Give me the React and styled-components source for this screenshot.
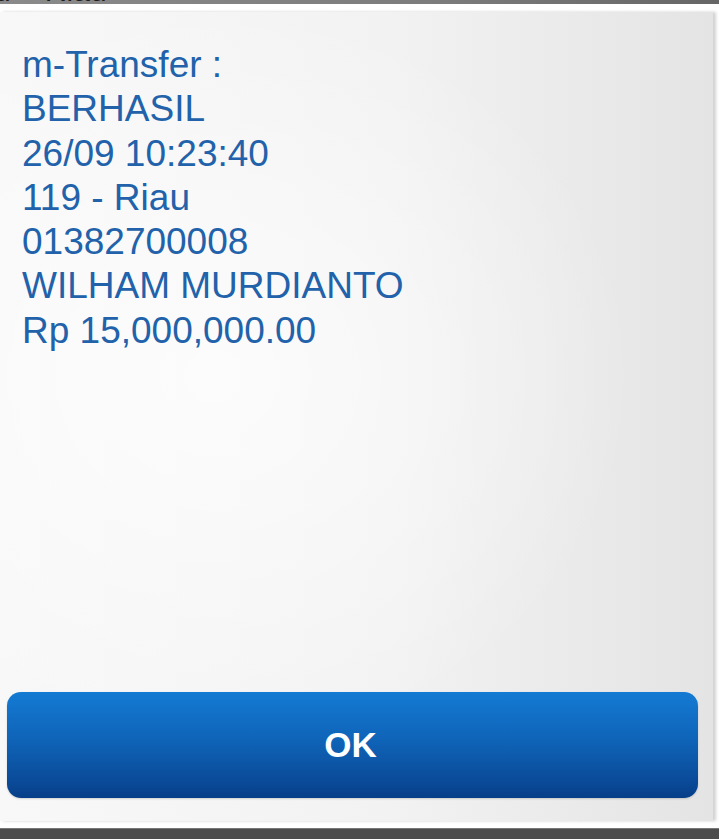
import styled, { createGlobalStyle } from "styled-components";

const Global = createGlobalStyle`
  html, body {
    margin: 0;
    padding: 0;
    background: #ffffff;
  }
  body {
    font-family: "Liberation Sans", Arial, sans-serif;
  }
`;

const lines = [
  "m-Transfer :",
  "BERHASIL",
  "26/09 10:23:40",
  "119 - Riau",
  "01382700008",
  "WILHAM MURDIANTO",
  "Rp 15,000,000.00",
];

const App = () => {
  return (
    <Screen>
      <Global />
      <TopBar>
        <CutText>d = Riau</CutText>
      </TopBar>
      <Panel>
        <Message>
          {lines.map((l) => (
            <Line key={l}>{l}</Line>
          ))}
        </Message>
        <OkButton>OK</OkButton>
      </Panel>
      <BottomBar />
    </Screen>
  );
};

export default App;

const Screen = styled.div`
  width: 719px;
  height: 839px;
  display: flex;
  flex-direction: column;
  background: #ffffff;
  overflow: hidden;
`;

const TopBar = styled.div`
  height: 4px;
  flex-shrink: 0;
  margin-bottom: 8px;
  background: linear-gradient(to right, #8a8a8a, #7c7c7c 60%, #666666);
  overflow: hidden;
`;

const CutText = styled.div`
  margin-top: -24px;
  margin-left: -6px;
  font-size: 30px;
  line-height: 30px;
  color: #1e1e1e;
  white-space: nowrap;
`;

const Panel = styled.div`
  flex: 1;
  margin-right: 6px;
  display: flex;
  flex-direction: column;
  justify-content: space-between;
  padding: 31px 15px 23px 7px;
  background:
    radial-gradient(ellipse at 30% 45%, rgba(255, 255, 255, 0.7), rgba(255, 255, 255, 0) 60%),
    linear-gradient(to right, #f8f8f8 0%, #f2f2f2 55%, #e4e4e4 100%);
  box-shadow: 3px 0 3px rgba(0, 0, 0, 0.18);
`;

const Message = styled.div`
  display: flex;
  flex-direction: column;
  padding-left: 15px;
`;

const Line = styled.div`
  font-family: "Liberation Sans", Arial, sans-serif;
  font-size: 37px;
  line-height: 44.3px;
  color: #2162aa;
  white-space: nowrap;
`;

const OkButton = styled.button`
  height: 106px;
  width: 100%;
  border: none;
  border-radius: 14px;
  background: linear-gradient(to bottom, #147ad3 0%, #0f64b8 45%, #0a4a98 85%, #073f88 100%);
  box-shadow: 0 1px 2px rgba(0, 0, 0, 0.15);
  color: #ffffff;
  font-family: "Liberation Sans", Arial, sans-serif;
  font-weight: bold;
  font-size: 35px;
  padding: 0 4px 0 0;
  cursor: pointer;
`;

const BottomBar = styled.div`
  height: 10px;
  flex-shrink: 0;
  margin-top: 7px;
  background: #4c4c4c;
  border-top: 1px solid #777;
`;
